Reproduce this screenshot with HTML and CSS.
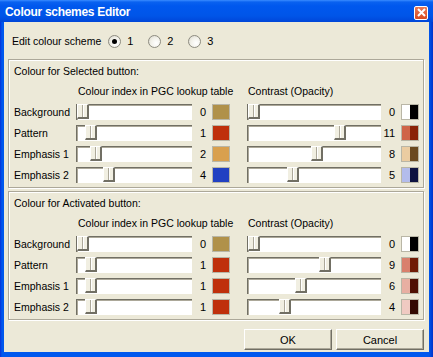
FILE: index.html
```html
<!DOCTYPE html>
<html lang="en">
<head>
    <meta charset="UTF-8">
    <title>Colour schemes Editor</title>
    <link rel="stylesheet" href="styles.css">
</head>
<body>
    <div class="window">
        <div class="titlebar">
            <span class="title">Colour schemes Editor</span>
            <span class="close">
                <svg width="9" height="9" viewBox="0 0 9 9"><path d="M1 1 L8 8 M8 1 L1 8" stroke="#fff" stroke-width="2"/></svg>
            </span>
        </div>
        <div class="client">
            <div class="scheme">
                <span class="scheme-label">Edit colour scheme</span>
                <span class="radio checked"></span><span class="radio-text">1</span>
                <span class="radio"></span><span class="radio-text">2</span>
                <span class="radio"></span><span class="radio-text">3</span>
            </div>

            <div class="group">
                <div class="group-title">Colour for Selected button:</div>
                <div class="grid">
                    <span></span>
                    <span class="head">Colour index in PGC lookup table</span>
                    <span class="head head2">Contrast (Opacity)</span>

                    <span class="lbl">Background</span>
                    <span class="track"><span class="thumb" style="left: 0px"></span></span>
                    <span class="num">0</span>
                    <span class="swatch" style="background: #b09149"></span>
                    <span></span>
                    <span class="track"><span class="thumb" style="left: 0px"></span></span>
                    <span class="num">0</span>
                    <span class="swatch pair"><i style="background: #fff"></i><i style="background: #000"></i></span>

                    <span class="lbl">Pattern</span>
                    <span class="track"><span class="thumb" style="left: 8px"></span></span>
                    <span class="num">1</span>
                    <span class="swatch" style="background: #bf300b"></span>
                    <span></span>
                    <span class="track"><span class="thumb" style="left: 86px"></span></span>
                    <span class="num">11</span>
                    <span class="swatch pair"><i style="background: #cf6448"></i><i style="background: #8a2207"></i></span>

                    <span class="lbl">Emphasis 1</span>
                    <span class="track"><span class="thumb" style="left: 13px"></span></span>
                    <span class="num">2</span>
                    <span class="swatch" style="background: #d9a04e"></span>
                    <span></span>
                    <span class="track"><span class="thumb" style="left: 63px"></span></span>
                    <span class="num">8</span>
                    <span class="swatch pair"><i style="background: #ebcca1"></i><i style="background: #6b4a20"></i></span>

                    <span class="lbl">Emphasis 2</span>
                    <span class="track"><span class="thumb" style="left: 26px"></span></span>
                    <span class="num">4</span>
                    <span class="swatch" style="background: #2140c2"></span>
                    <span></span>
                    <span class="track"><span class="thumb" style="left: 39px"></span></span>
                    <span class="num">5</span>
                    <span class="swatch pair"><i style="background: #b3bcec"></i><i style="background: #0d1240"></i></span>
                </div>
            </div>

            <div class="group">
                <div class="group-title">Colour for Activated button:</div>
                <div class="grid">
                    <span></span>
                    <span class="head">Colour index in PGC lookup table</span>
                    <span class="head head2">Contrast (Opacity)</span>

                    <span class="lbl">Background</span>
                    <span class="track"><span class="thumb" style="left: 0px"></span></span>
                    <span class="num">0</span>
                    <span class="swatch" style="background: #b09149"></span>
                    <span></span>
                    <span class="track"><span class="thumb" style="left: 0px"></span></span>
                    <span class="num">0</span>
                    <span class="swatch pair"><i style="background: #fff"></i><i style="background: #000"></i></span>

                    <span class="lbl">Pattern</span>
                    <span class="track"><span class="thumb" style="left: 8px"></span></span>
                    <span class="num">1</span>
                    <span class="swatch" style="background: #bf300b"></span>
                    <span></span>
                    <span class="track"><span class="thumb" style="left: 71px"></span></span>
                    <span class="num">9</span>
                    <span class="swatch pair"><i style="background: #d9806d"></i><i style="background: #701b05"></i></span>

                    <span class="lbl">Emphasis 1</span>
                    <span class="track"><span class="thumb" style="left: 8px"></span></span>
                    <span class="num">1</span>
                    <span class="swatch" style="background: #bf300b"></span>
                    <span></span>
                    <span class="track"><span class="thumb" style="left: 47px"></span></span>
                    <span class="num">6</span>
                    <span class="swatch pair"><i style="background: #e8afa2"></i><i style="background: #4f1003"></i></span>

                    <span class="lbl">Emphasis 2</span>
                    <span class="track"><span class="thumb" style="left: 8px"></span></span>
                    <span class="num">1</span>
                    <span class="swatch" style="background: #bf300b"></span>
                    <span></span>
                    <span class="track"><span class="thumb" style="left: 31px"></span></span>
                    <span class="num">4</span>
                    <span class="swatch pair"><i style="background: #f0cac2"></i><i style="background: #340902"></i></span>
                </div>
            </div>

            <div class="buttons">
                <button class="btn">OK</button>
                <button class="btn">Cancel</button>
            </div>
        </div>
    </div>
</body>
</html>
```

FILE: styles.css
```css
body {
    margin: 0;
    font-family: "Liberation Sans", Arial, sans-serif;
    font-size: 10.5px;
    color: #000;
}
.window {
    width: 433px;
    height: 357px;
    background: linear-gradient(to right, #0831d9, #0058ee 2px, #0058ee 429px, #0033c8);
    display: flex;
    flex-direction: column;
    box-sizing: border-box;
}
.titlebar {
    height: 22px;
    display: flex;
    align-items: center;
    justify-content: space-between;
    padding: 0 5px 0 5px;
    background: linear-gradient(to bottom, #3a8cff 0px, #0a62f0 2px, #0058ee 6px, #0055e8 16px, #0046d8 22px);
}
.title {
    color: #fff;
    font-weight: bold;
    font-size: 12px;
    letter-spacing: -0.3px;
    margin-top: 2px;
}
.close {
    width: 12px;
    height: 12px;
    border: 1px solid #fff;
    border-radius: 2px;
    background: linear-gradient(to bottom, #e87a58, #d84a20);
    display: flex;
    align-items: center;
    justify-content: center;
    margin-top: 3px;
}
.client {
    flex: 1;
    background: #ece9d8;
    margin: 0 4px 5px 4px;
    padding: 0 5px 0 4px;
}
.scheme {
    display: flex;
    align-items: center;
    height: 26px;
    margin-top: 6px;
    padding-left: 4px;
}
.scheme-label {
    margin-right: 7px;
}
.radio {
    width: 11px;
    height: 11px;
    border: 1px solid #8d8b80;
    border-radius: 50%;
    background: radial-gradient(circle at 65% 65%, #fff, #f2f1ea 50%, #d6d4c8);
    display: inline-flex;
    align-items: center;
    justify-content: center;
    margin-right: 6px;
}
.radio.checked::after {
    content: "";
    width: 5px;
    height: 5px;
    border-radius: 50%;
    background: #000;
}
.radio-text {
    width: 21px;
    font-size: 11px;
}
.group {
    border: 1px solid #aca899;
    box-shadow: inset 1px 1px 0 #fff, 1px 1px 0 #fff;
    padding: 5px 5px 4px 5px;
    margin-top: 5px;
}
.group + .group {
    margin-top: 3px;
}
.group-title {
    height: 13px;
    line-height: 13px;
}
.grid {
    display: grid;
    grid-template-columns: 62px 116px 20px 18px 17px 134px 20px 18px;
    grid-auto-rows: 16px;
    row-gap: 5px;
    margin-top: 5px;
    align-items: center;
}
.head {
    grid-column: 2 / 5;
    padding-left: 2px;
    white-space: nowrap;
}
.head2 {
    grid-column: 6 / 9;
    padding-left: 1px;
}
.lbl {
    white-space: nowrap;
}
.track {
    position: relative;
    height: 16px;
    background: #fff;
    box-sizing: border-box;
    border-top: 1px solid #716f64;
    border-left: 1px solid #716f64;
    box-shadow: inset 1px 1px 0 #aca899;
}
.thumb {
    position: absolute;
    top: 0;
    width: 12px;
    height: 15px;
    box-sizing: border-box;
    background: #f1efe2;
    border-left: 1px solid #fff;
    border-top: 1px solid #fff;
    border-right: 2px solid #716f64;
    border-bottom: 2px solid #716f64;
    margin-top: -1px;
}
.thumb::after {
    content: "";
    position: absolute;
    left: 4px;
    top: 0;
    bottom: 0;
    width: 1px;
    background: #aca899;
    border-right: 1px solid #fff;
}
.num {
    text-align: right;
    padding-right: 6px;
    font-size: 11px;
}
.swatch {
    height: 16px;
    box-sizing: border-box;
    border: 1px solid #b9b6a6;
    display: flex;
}
.swatch i {
    flex: 1;
}
.buttons {
    display: flex;
    justify-content: flex-end;
    gap: 4px;
    margin-top: 9px;
}
.btn {
    width: 88px;
    height: 21px;
    font-family: "Liberation Sans", Arial, sans-serif;
    font-size: 11px;
    background: #ece9d8;
    border: none;
    border-top: 1px solid #fff;
    border-left: 1px solid #fff;
    border-right: 1px solid #716f64;
    border-bottom: 1px solid #716f64;
    box-shadow: inset -1px -1px 0 #aca899;
    padding: 0;
    color: #000;
}
```
